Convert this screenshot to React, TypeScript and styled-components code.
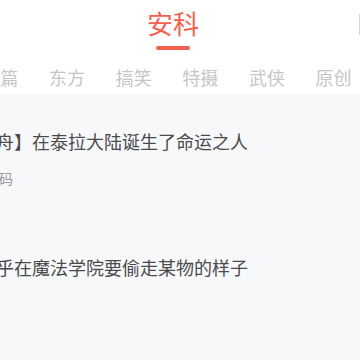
import styled, { createGlobalStyle } from "styled-components";

const GlobalStyle = createGlobalStyle`
  html, body {
    margin: 0;
    padding: 0;
    background: #f7f8fa;
    overflow: hidden;
  }
  body {
    font-family: "Noto Sans CJK SC", "Noto Sans", sans-serif;
  }
`;

const tabs = ["短篇", "东方", "搞笑", "特摄", "武侠", "原创"];

const posts = [
  { title: "【明日方舟】在泰拉大陆诞生了命运之人", meta: "作者：阿乱码" },
  { title: "主人公似乎在魔法学院要偷走某物的样子" },
];

const App = () => {
  return (
    <>
      <GlobalStyle />
      <Page>
        <Header>
          <TitleRow>
            <Title>安科</Title>
            <Underline />
          </TitleRow>
          <Tabs>
            {tabs.map((t) => (
              <Tab key={t}>{t}</Tab>
            ))}
          </Tabs>
          <EdgeBar />
        </Header>
        <Content>
          {posts.map((p) => (
            <Post key={p.title}>
              <PostTitle>{p.title}</PostTitle>
              {p.meta && <Meta>{p.meta}</Meta>}
            </Post>
          ))}
        </Content>
      </Page>
    </>
  );
};

const Page = styled.div`
  width: 360px;
  height: 360px;
  overflow: hidden;
  background: #f7f8fa;
`;

const Header = styled.header`
  position: relative;
  height: 94px;
  background: #ffffff;
`;

const TitleRow = styled.div`
  display: flex;
  flex-direction: column;
  align-items: center;
  padding-right: 14px;
  padding-top: 10px;
`;

const Title = styled.div`
  font-size: 26px;
  line-height: 26px;
  color: #f5604e;
`;

const Underline = styled.div`
  width: 34px;
  height: 4px;
  margin-top: 10px;
  border-radius: 2px;
  background: #f5604e;
`;

const Tabs = styled.div`
  display: flex;
  margin-left: -33px;
  margin-top: 18px;
`;

const Tab = styled.div`
  flex: 0 0 66.67px;
  text-align: center;
  font-size: 18px;
  line-height: 18px;
  color: #c6c6c6;
  white-space: nowrap;
`;

const EdgeBar = styled.div`
  position: absolute;
  right: 0;
  top: 14px;
  width: 1px;
  height: 21px;
  background: #d6d6d6;
`;

const Content = styled.main`
  display: flex;
  flex-direction: column;
  gap: 73px;
  padding-top: 38px;
  margin-left: -76px;
`;

const Post = styled.div`
  display: flex;
  flex-direction: column;
  gap: 21px;
  white-space: nowrap;
`;

const PostTitle = styled.div`
  font-size: 18px;
  line-height: 18px;
  color: #4a4a4a;
`;

const Meta = styled.div`
  font-size: 14px;
  line-height: 14px;
  color: #9a9a9a;
  padding-left: 5px;
`;

export default App;
